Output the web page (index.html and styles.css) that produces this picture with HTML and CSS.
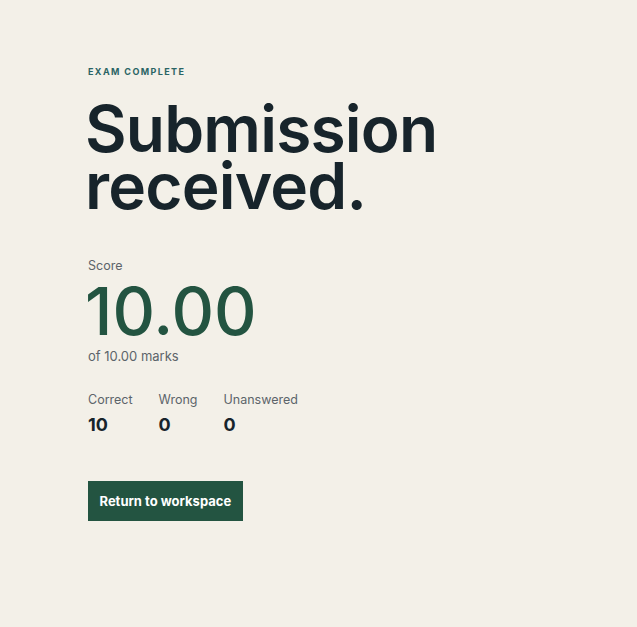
FILE: index.html
```html
<!DOCTYPE html>
<html lang="en">
<head>
<meta charset="UTF-8">
<meta name="viewport" content="width=device-width, initial-scale=1.0">
<title>Exam complete</title>
<link rel="stylesheet" href="styles.css">
</head>
<body>
<div class="result">
  <div class="eyebrow">Exam complete</div>
  <h1>Submission<br>received.</h1>

  <div class="score">
    <div class="label">Score</div>
    <div class="score-value">10.00</div>
    <div class="score-total">of 10.00 marks</div>
  </div>

  <div class="stats">
    <div class="stat">
      <div class="label">Correct</div>
      <div class="stat-value">10</div>
    </div>
    <div class="stat">
      <div class="label">Wrong</div>
      <div class="stat-value">0</div>
    </div>
    <div class="stat">
      <div class="label">Unanswered</div>
      <div class="stat-value">0</div>
    </div>
  </div>

  <a href="#" class="button">Return to workspace</a>
</div>
</body>
</html>
```

FILE: styles.css
```css
body {
  margin: 0;
  padding: 0;
  background-color: #f3f0e8;
  font-family: Inter, "Noto Sans", sans-serif;
  color: #17242b;
}

.result {
  padding: 66px 88px;
}

.eyebrow {
  font-size: 9px;
  font-weight: 700;
  letter-spacing: 1.4px;
  text-transform: uppercase;
  color: #2a6464;
}

h1 {
  margin: 23px 0 0 -3px;
  font-size: 64px;
  font-weight: 600;
  line-height: 57px;
  letter-spacing: -0.8px;
  color: #17242b;
}

.label {
  font-size: 12.5px;
  color: #5c646a;
}

.score {
  margin-top: 44px;
}

.score-value {
  margin: 2px 0 0 -3px;
  font-size: 66px;
  font-weight: 500;
  line-height: 73px;
  letter-spacing: 0;
  color: #235441;
}

.score-total {
  font-size: 13px;
  color: #5c646a;
}

.stats {
  display: flex;
  gap: 26px;
  margin-top: 28px;
}

.stat-value {
  margin-top: 7px;
  font-size: 18px;
  font-weight: 700;
  color: #17242b;
}

.button {
  display: inline-block;
  margin-top: 46px;
  padding: 12px 11.5px;
  background-color: #235441;
  color: #fff;
  font-size: 13px;
  font-weight: 700;
  text-decoration: none;
}
```
